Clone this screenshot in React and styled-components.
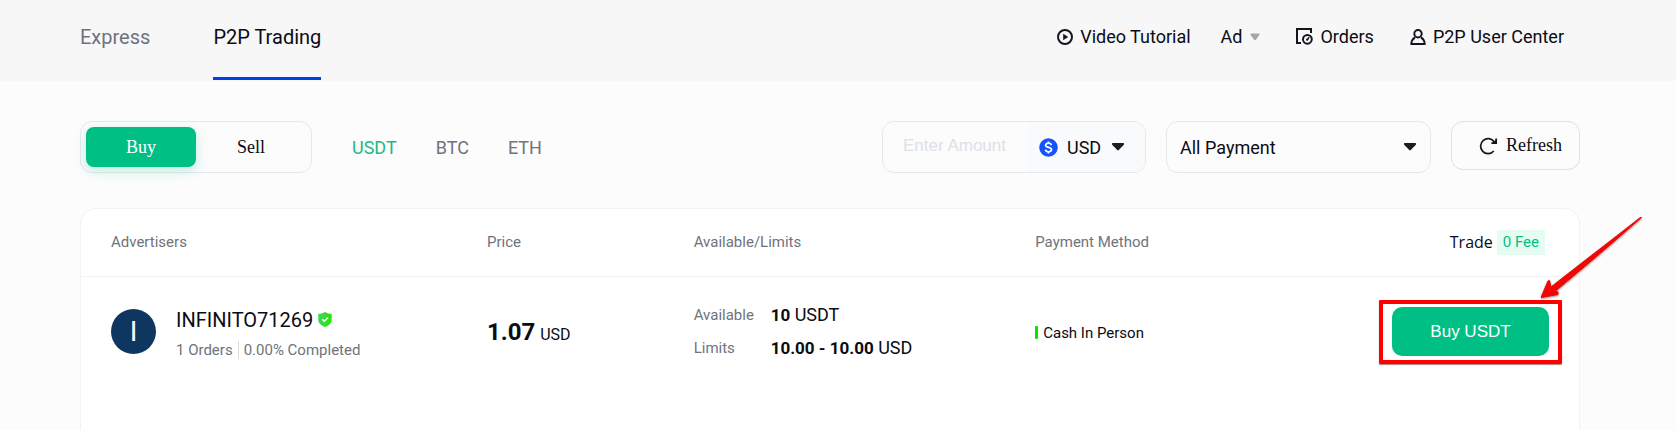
import React from 'react';
import styled, { createGlobalStyle, css } from 'styled-components';

const GlobalStyle = createGlobalStyle`
  *, *::before, *::after { box-sizing: border-box; }
  body {
    margin: 0;
    background: #fcfcfc;
    color: #0b0c14;
    font-family: Roboto, "Liberation Sans", sans-serif;
    font-size: 18px;
  }
  a { color: inherit; text-decoration: none; }
  button, input, select { margin: 0; font: inherit; color: inherit; }
  button, select { cursor: pointer; }
`;

const Page = styled.div`
  min-height: 100vh;
  display: flex;
  flex-direction: column;
`;

const gutters = css`
  padding-left: 80px;
  padding-right: 96px;
`;

const Header = styled.header`
  ${gutters}
  height: 81px;
  display: flex;
  justify-content: space-between;
  background: #f7f7f7;
`;

const MainTabs = styled.nav`
  display: flex;
  gap: 63px;
`;

const MainTab = styled.a`
  height: 80px;
  padding-bottom: 3px;
  display: flex;
  align-items: center;
  font-size: 20px;
  color: ${(p) => (p.$active ? '#0b0c14' : '#6f737c')};
  border-bottom: 3px solid ${(p) => (p.$active ? '#0040e5' : 'transparent')};
`;

const UserNav = styled.nav`
  display: flex;
  align-items: center;
  gap: 36px;
  padding: 0 16px 8px 0;
`;

const UserLink = styled.a`
  display: flex;
  align-items: center;
  gap: 7px;
`;

const AdButton = styled.button`
  display: flex;
  align-items: center;
  gap: 8px;
  padding: 0;
  margin-left: -6px;
  border: 0;
  background: none;
`;

const Main = styled.main`
  ${gutters}
  flex: 1;
  display: flex;
  flex-direction: column;
  padding-top: 40px;
  gap: 35px;
`;

const Toolbar = styled.div`
  display: flex;
  justify-content: space-between;
  align-items: flex-start;
  gap: 20px;
`;

const ToolGroup = styled.div`
  display: flex;
  align-items: flex-start;
  gap: ${(p) => p.$gap};
`;

const outlined = css`
  border: 1px solid #e6e8f0;
  border-radius: 12px;
`;

const SideToggle = styled.div`
  ${outlined}
  display: flex;
  height: 52px;
  padding: 5px;
`;

const SideButton = styled.button`
  width: 110px;
  border: 0;
  border-radius: 8px;
  font-family: "Liberation Serif", serif;
  background: ${(p) => (p.$active ? '#00bf85' : 'transparent')};
  color: ${(p) => (p.$active ? '#fff' : '#0b0c14')};
  box-shadow: ${(p) => (p.$active ? '0 4px 12px rgba(0, 191, 133, 0.25)' : 'none')};
`;

const CoinTabs = styled.nav`
  display: flex;
  align-items: center;
  gap: 39px;
  height: 52px;
`;

const CoinTab = styled.a`
  color: ${(p) => (p.$active ? '#1dba80' : '#6f737c')};
`;

const AmountBox = styled.div`
  ${outlined}
  display: flex;
  width: 264px;
  height: 52px;
  overflow: hidden;
`;

const AmountInput = styled.input`
  flex: 1;
  min-width: 0;
  padding: 0 0 2px 20px;
  border: 0;
  outline: 0;
  background: none;
  font-family: "Liberation Sans", sans-serif;
  font-size: 17px;
  &::placeholder { color: #dce0e8; opacity: 1; }
`;

const CurrencyPicker = styled.label`
  display: flex;
  align-items: center;
  gap: 9px;
  width: 117px;
  padding-left: 11px;
  background: #f9fafc;
`;

const SelectWrap = styled.span`
  flex: 1;
  display: grid;
  align-items: center;
  > * { grid-area: 1 / 1; }
  > svg {
    justify-self: end;
    margin-right: ${(p) => p.$inset};
    pointer-events: none;
  }
`;

const Select = styled.select`
  appearance: none;
  width: 100%;
  height: 50px;
  padding: 0 0 0 ${(p) => p.$indent};
  border: 0;
  outline: 0;
  background: none;
`;

const PaymentBox = styled.div`
  ${outlined}
  display: flex;
  width: 265px;
  height: 52px;
`;

const RefreshButton = styled.button`
  border: 1px solid #dddfea;
  border-radius: 12px;
  display: flex;
  align-items: center;
  justify-content: flex-end;
  gap: 8px;
  width: 129px;
  height: 49px;
  padding: 0 17px 0 0;
  background: none;
  font-family: "Liberation Serif", serif;
`;

const Card = styled.section`
  flex: 1;
  background: #fff;
  border: 1px solid #f2f3f5;
  border-bottom: 0;
  border-radius: 16px 16px 0 0;
`;

const OffersTable = styled.table`
  width: 100%;
  table-layout: fixed;
  border-collapse: collapse;
  text-align: left;
`;

const Col = styled.col`
  width: ${(p) => p.$width};
`;

const HeadCell = styled.th`
  height: 67px;
  padding: 0 ${(p) => (p.$end ? '34px' : '0')} 0 ${(p) => (p.$first ? '30px' : '0')};
  border-bottom: 1px solid #f2f3f5;
  font-size: 15px;
  font-weight: 400;
  color: #6f737c;
  text-align: ${(p) => (p.$end ? 'right' : 'left')};
`;

const Cell = styled.td`
  height: 111px;
  padding: 0 ${(p) => (p.$end ? '30px' : '0')} 0 ${(p) => (p.$first ? '30px' : '0')};
  text-align: ${(p) => (p.$end ? 'right' : 'left')};
`;

const TradeHead = styled.div`
  display: flex;
  justify-content: flex-end;
  align-items: center;
  gap: 4px;
`;

const TradeLabel = styled.span`
  font-family: "Open Sans", sans-serif;
  font-size: 16px;
  line-height: 22px;
  color: #0b0c14;
`;

const FeeBadge = styled.span`
  padding: 0 6px;
  line-height: 25px;
  background: #e5fdf1;
  color: #00bf85;
`;

const Advertiser = styled.div`
  display: flex;
  align-items: center;
  gap: 20px;
`;

const Avatar = styled.span`
  width: 45px;
  height: 45px;
  border-radius: 50%;
  display: flex;
  align-items: center;
  justify-content: center;
  background: #0f3660;
  color: #fff;
  font-size: 28px;
`;

const AdvertiserInfo = styled.div`
  display: flex;
  flex-direction: column;
  gap: 8px;
  padding-top: 4px;
`;

const AdvertiserName = styled.a`
  display: flex;
  align-items: center;
  gap: 5px;
  font-size: 20px;
  line-height: 24px;
`;

const Stats = styled.div`
  font-size: 15px;
  line-height: 20px;
  color: #6f737c;
`;

const Divider = styled.span`
  margin: 0 5px;
  border-left: 1px solid #d9dbe0;
`;

const Price = styled.div`
  padding-top: 4px;
  font-size: 16px;
  line-height: 32px;
`;

const PriceValue = styled.strong`
  margin-right: 5px;
  font-size: 24px;
`;

const Limits = styled.dl`
  display: grid;
  grid-template-columns: 77px 1fr;
  row-gap: 9px;
  margin: 0;
  line-height: 24px;
`;

const LimitLabel = styled.dt`
  font-size: 15px;
  color: #6f737c;
`;

const LimitValue = styled.dd`
  margin: 0;
`;

const Figure = styled.strong`
  font-size: 17px;
`;

const Method = styled.div`
  display: flex;
  align-items: center;
  gap: 5px;
  padding-top: 2px;
  font-size: 15px;
  &::before {
    content: '';
    width: 3px;
    height: 13px;
    border-radius: 1px;
    background: #00e600;
  }
`;

const BuyWrap = styled.div`
  position: relative;
  display: inline-block;
  vertical-align: middle;
`;

const BuyButton = styled.button`
  display: block;
  width: 157px;
  height: 49px;
  padding: 0;
  border: 0;
  border-radius: 10px;
  background: #00bf85;
  color: #fff;
  font-family: "Liberation Sans", sans-serif;
  font-size: 17px;
`;

const Highlight = styled.span`
  position: absolute;
  inset: -7px -13px -8px;
  border: 4px solid #fe0000;
  border-radius: 1px;
  box-shadow: 0 1px 1px rgba(90, 0, 0, 0.5);
  pointer-events: none;
`;

const Arrow = styled.svg`
  position: absolute;
  left: 149px;
  bottom: 58px;
  pointer-events: none;
  filter: drop-shadow(0 1px 1px rgba(60, 0, 0, 0.5));
`;

const PlayIcon = () => (
  <svg width="16" height="16" viewBox="0 0 16 16" aria-hidden="true">
    <circle cx="8" cy="8" r="7" fill="none" stroke="#15161c" strokeWidth="2" />
    <path d="M6.200 4.800 11.200 8l-5 3.200z" fill="#15161c" />
  </svg>
);

const OrdersIcon = () => (
  <svg width="17" height="17" viewBox="0 0 17 17" fill="none" stroke="#15161c" strokeWidth="2" aria-hidden="true">
    <path d="M5 15H1V1h14v4" />
    <circle cx="11.400" cy="11.300" r="4.400" />
    <path d="m13.200 9.200-1.600 2.100" strokeWidth="1.400" />
    <circle cx="11.200" cy="11.600" r="1.200" fill="#15161c" stroke="none" />
  </svg>
);

const UserIcon = () => (
  <svg width="16" height="16" viewBox="0 0 16 16" fill="none" stroke="#15161c" strokeWidth="2" aria-hidden="true">
    <circle cx="8" cy="4.800" r="3.700" />
    <path d="M5 8.400C2.700 9.800 1.500 12 1.200 15h13.600c-.3-3-1.500-5.200-3.800-6.600" strokeLinejoin="round" />
  </svg>
);

const AdCaret = () => (
  <svg width="10" height="8" viewBox="0 0 10 8" aria-hidden="true">
    <path d="M1.500.5h7c1 0 1.300.8.9 1.400L5.900 6.700c-.5.600-1.300.600-1.800 0L.6 1.900C.2 1.300.500.500 1.500.500z" fill="#a3a6ae" />
  </svg>
);

const Caret = () => (
  <svg width="12" height="8" viewBox="0 0 12 8" aria-hidden="true">
    <path d="M.7 0h10.600c.7 0 .9.800.600 1.400-.5 1-1.200 1.700-2 2.300L6.800 7.100c-.5.500-1.100.500-1.600 0L2.100 3.700C1.300 3.100.600 2.400.100 1.400-.2.800 0 0 .7 0z" fill="#1c1d22" />
  </svg>
);

const DollarIcon = () => (
  <svg width="19" height="19" viewBox="0 0 19 19" aria-hidden="true">
    <circle cx="9.500" cy="9.500" r="9.300" fill="#1652f9" />
    <path
      d="M12.400 7.100C12.100 5.900 11 5.200 9.500 5.200c-1.700 0-2.900.8-2.900 2.100 0 3 5.900 1.300 5.900 4.300 0 1.400-1.200 2.200-3 2.200-1.700 0-2.900-.8-3.100-2.100M9.500 3.500v2M9.500 13.500v2"
      fill="none"
      stroke="#fff"
      strokeWidth="1.700"
    />
  </svg>
);

const RefreshIcon = () => (
  <svg width="19" height="18" viewBox="0 0 19 18" fill="none" stroke="#15161c" strokeWidth="1.700" aria-hidden="true">
    <path d="M14.800 14A7.500 7.500 0 1 1 15.300 4.900" />
    <path d="M17.200 1.600v4.600h-4.800" />
    <path d="M17.200 2.600v3.600h-3.600z" fill="#15161c" strokeWidth="0.500" />
  </svg>
);

const ShieldIcon = () => (
  <svg width="14" height="15" viewBox="0 0 14 15" role="img" aria-label="Verified">
    <path d="M7 0C5 1.300 2.600 1.900.3 1.900v5.800c0 3.500 3 5.800 6.700 7.200z" fill="#35d94a" />
    <path d="M7 0c2 1.300 4.400 1.900 6.700 1.900v5.800c0 3.500-3 5.800-6.700 7.200z" fill="#2ae30f" />
    <path d="m4.200 7.300 2.100 2 3.700-3.700" fill="none" stroke="#fff" strokeWidth="1.500" />
  </svg>
);

const coins = ['USDT', 'BTC', 'ETH'];

export default function App() {
  return (
    <>
      <GlobalStyle />
      <Page>
        <Header>
          <MainTabs aria-label="Trading mode">
            <MainTab href="#express">Express</MainTab>
            <MainTab href="#p2p" $active aria-current="page">P2P Trading</MainTab>
          </MainTabs>
          <UserNav aria-label="Account">
            <UserLink href="#tutorial"><PlayIcon />Video Tutorial</UserLink>
            <AdButton type="button">Ad<AdCaret /></AdButton>
            <UserLink href="#orders"><OrdersIcon />Orders</UserLink>
            <UserLink href="#user"><UserIcon />P2P User Center</UserLink>
          </UserNav>
        </Header>

        <Main>
          <Toolbar>
            <ToolGroup $gap="40px">
              <SideToggle>
                <SideButton type="button" $active aria-pressed="true">Buy</SideButton>
                <SideButton type="button" aria-pressed="false">Sell</SideButton>
              </SideToggle>
              <CoinTabs aria-label="Coin">
                {coins.map((coin, i) => (
                  <CoinTab key={coin} href={`#${coin}`} $active={i === 0}>{coin}</CoinTab>
                ))}
              </CoinTabs>
            </ToolGroup>
            <ToolGroup $gap="20px">
              <AmountBox>
                <AmountInput type="text" aria-label="Amount" placeholder="Enter Amount" />
                <CurrencyPicker>
                  <DollarIcon />
                  <SelectWrap $inset="21px">
                    <Select $indent="0" aria-label="Currency" defaultValue="USD">
                      <option>USD</option>
                    </Select>
                    <Caret />
                  </SelectWrap>
                </CurrencyPicker>
              </AmountBox>
              <PaymentBox>
                <SelectWrap $inset="14px">
                  <Select $indent="13px" aria-label="Payment method" defaultValue="All Payment">
                    <option>All Payment</option>
                  </Select>
                  <Caret />
                </SelectWrap>
              </PaymentBox>
              <RefreshButton type="button"><RefreshIcon />Refresh</RefreshButton>
            </ToolGroup>
          </Toolbar>

          <Card>
            <OffersTable>
              <colgroup>
                <Col $width="27.1%" />
                <Col $width="13.8%" />
                <Col $width="22.8%" />
                <Col $width="16%" />
                <Col />
              </colgroup>
              <thead>
                <tr>
                  <HeadCell scope="col" $first>Advertisers</HeadCell>
                  <HeadCell scope="col">Price</HeadCell>
                  <HeadCell scope="col">Available/Limits</HeadCell>
                  <HeadCell scope="col">Payment Method</HeadCell>
                  <HeadCell scope="col" $end>
                    <TradeHead>
                      <TradeLabel>Trade</TradeLabel>
                      <FeeBadge>0 Fee</FeeBadge>
                    </TradeHead>
                  </HeadCell>
                </tr>
              </thead>
              <tbody>
                <tr>
                  <Cell $first>
                    <Advertiser>
                      <Avatar aria-hidden="true">I</Avatar>
                      <AdvertiserInfo>
                        <AdvertiserName href="#advertiser">INFINITO71269<ShieldIcon /></AdvertiserName>
                        <Stats>1 Orders<Divider />0.00% Completed</Stats>
                      </AdvertiserInfo>
                    </Advertiser>
                  </Cell>
                  <Cell>
                    <Price><PriceValue>1.07</PriceValue>USD</Price>
                  </Cell>
                  <Cell>
                    <Limits>
                      <LimitLabel>Available</LimitLabel>
                      <LimitValue><Figure>10</Figure> USDT</LimitValue>
                      <LimitLabel>Limits</LimitLabel>
                      <LimitValue><Figure>10.00 - 10.00</Figure> USD</LimitValue>
                    </Limits>
                  </Cell>
                  <Cell><Method>Cash In Person</Method></Cell>
                  <Cell $end>
                    <BuyWrap>
                      <BuyButton type="button">Buy USDT</BuyButton>
                      <Highlight />
                      <Arrow width="101" height="81" viewBox="0 0 101 81" aria-hidden="true">
                        <path
                          d="M100 0C72 22 43 44 10 70L8.500 63.500 7 64 0 80.500 17 77.500V75L14.500 74C48 46 75 23 100.500.500Z"
                          fill="#f20505"
                          stroke="#f20505"
                          strokeLinejoin="round"
                        />
                      </Arrow>
                    </BuyWrap>
                  </Cell>
                </tr>
              </tbody>
            </OffersTable>
          </Card>
        </Main>
      </Page>
    </>
  );
}
